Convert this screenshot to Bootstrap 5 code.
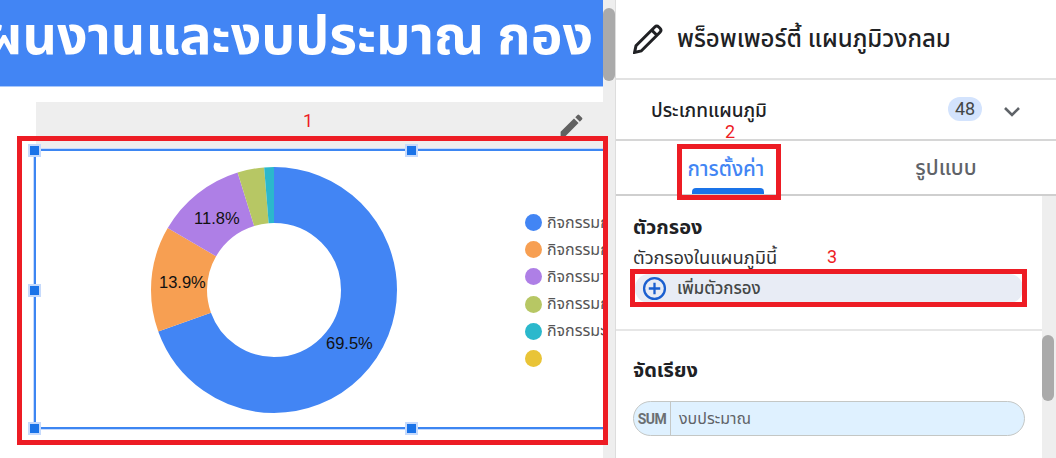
<!DOCTYPE html>
<html lang="th">
<head>
<meta charset="utf-8">
<title>พร็อพเพอร์ตี้ แผนภูมิวงกลม</title>
<link href="https://cdn.jsdelivr.net/npm/bootstrap@5.3.0/dist/css/bootstrap.min.css" rel="stylesheet">
<style>
html,body{height:458px;overflow:hidden;background:#fff;}
body{font-family:Roboto,"Noto Sans","Noto Sans Thai","Liberation Sans",sans-serif;color:#202124;position:relative;}
.shell{width:1056px;height:458px;}
.canvas-pane{width:603px;height:458px;overflow:hidden;}
.banner{height:87px;background:#4285f4;border-bottom:1px solid #a9c8fa;color:#fff;font-size:53.5px;font-weight:700;line-height:72px;white-space:nowrap;padding-right:10px;overflow:hidden;}
.chart-head{margin:15px 0 0 36px;height:48px;background:#eee;padding:9px 17px 0 0;}
.chart-frame{position:absolute;left:34px;top:149px;width:569px;height:280px;border:2px solid #3d86f2;border-right:0;outline:1px solid #c6dafc;}
.handle{position:absolute;width:9px;height:9px;background:#1a73e8;box-shadow:0 0 0 2px #c6dafc;}
.donut{position:absolute;left:151px;top:167px;}
.pct{position:absolute;font:16.5px "Liberation Sans",Arial,sans-serif;color:#111;line-height:18px;}
.legend-list{position:absolute;left:525px;top:209px;width:78px;overflow:hidden;}
.legend-row{height:27.2px;white-space:nowrap;color:#555;font-size:16px;}
.legend-dot{width:17px;height:17px;border-radius:50%;flex:none;margin-right:5px;}
.bar-track{width:13px;height:458px;background:#eee;border-right:1px solid #ddd;}
.thumb{background:#aaa;border-radius:6px;}
.thumb-a{width:12px;height:73px;}
.bar-track::before{content:"";display:block;height:8px;}
.panel{width:440px;height:458px;}
.panel-title{height:80px;border-bottom:2px solid #e2e2e2;padding-left:17px;font-size:24px;font-weight:500;gap:14px;}
.type-row{height:61px;border-bottom:2px solid #d6d6d6;padding:3px 32px 0 35px;font-size:19px;font-weight:500;}
.count{width:34px;height:24px;margin-top:-5px;border-radius:12px;background:#d3e3fd;color:#444746;font-size:18px;font-weight:400;}
.chev{margin-left:18px;}
.tabs{height:55px;border-bottom:2px solid #cfcfcf;font-size:21px;font-weight:500;}
.tab-item{width:50%;color:#5f6368;position:relative;padding-top:3px;}
.tab-on{color:#4285f4;font-size:20.5px;}
.tab-on::after{content:"";position:absolute;left:76px;bottom:0;width:72px;height:6px;background:#1a73e8;border-radius:4px 4px 0 0;}
.panel-body{height:262px;}
.panel-scroll{width:426px;}
.side-track{width:14px;background:#eee;}
.thumb-b{width:12px;height:66px;margin-top:139px;}
.block-filter{height:135px;border-bottom:2px solid #e6e6e6;padding:19px 17px 0 17px;}
.sec-head{font-size:20px;font-weight:700;line-height:24px;}
.sec-sub{font-size:18.3px;line-height:24px;margin-top:7px;color:#303134;}
.add-filter{height:29px;margin:4px 2px 0;background:#e8ecf5;border-radius:14px;font-size:16.8px;font-weight:500;color:#444746;padding-left:7px;gap:10px;}
.block-sort{padding:27px 17px 0 17px;}
.chip{height:35px;border:1px solid #c4c7c5;border-radius:18px;background:#dff1ff;margin-top:19px;font-size:16px;color:#5f6368;}
.chip-agg{width:37px;border-right:1px solid #c4c7c5;font:700 14px Roboto,sans-serif;letter-spacing:-.6px;color:#6b6f72;}
.note-box{position:absolute;border:5px solid #ed1c24;pointer-events:none;}
.note-num{position:absolute;color:#ed1c24;font-size:18px;line-height:20px;}
</style>
</head>
<body>
<div class="shell d-flex">
  <div class="canvas-pane">
    <div class="banner d-flex justify-content-end"><span>แผนงานและงบประมาณ กอง</span></div>
    <div class="chart-head d-flex justify-content-end">
      <svg width="29" height="29" viewBox="0 0 24 24" fill="#616161"><path d="M3 17.25V21h3.75L17.81 9.94l-3.75-3.75L3 17.25zM20.71 7.04a1 1 0 0 0 0-1.41l-2.34-2.34a1 1 0 0 0-1.41 0l-1.83 1.83 3.75 3.75 1.83-1.83z"/></svg>
    </div>
  </div>
  <div class="bar-track"><div class="thumb thumb-a"></div></div>
  <div class="panel d-flex flex-column">
    <div class="panel-title d-flex align-items-center">
      <svg width="30" height="30" viewBox="2.500 2.500 19 19" fill="none" stroke="#202124" stroke-width="1.900"><path d="M3.500 20.500l.9-4.200L16.300 4.400a1.800 1.800 0 0 1 2.500 0l.8.8a1.800 1.800 0 0 1 0 2.500L7.700 19.600l-4.200.9z"/><path d="M14.500 6.500l3 3"/></svg>
      <span>พร็อพเพอร์ตี้ แผนภูมิวงกลม</span>
    </div>
    <div class="type-row d-flex align-items-center">
      <span class="flex-grow-1">ประเภทแผนภูมิ</span>
      <span class="count d-flex align-items-center justify-content-center">48</span>
      <svg class="chev" width="24" height="24" viewBox="0 0 24 24" fill="none" stroke="#5f6368" stroke-width="2.600"><path d="M5 9l7 7 7-7"/></svg>
    </div>
    <div class="tabs d-flex">
      <div class="tab-item tab-on d-flex align-items-center justify-content-center">การตั้งค่า</div>
      <div class="tab-item d-flex align-items-center justify-content-center">รูปแบบ</div>
    </div>
    <div class="panel-body d-flex">
      <div class="panel-scroll">
        <div class="block-filter">
          <div class="sec-head">ตัวกรอง</div>
          <div class="sec-sub">ตัวกรองในแผนภูมินี้</div>
          <div class="add-filter d-flex align-items-center">
            <svg width="25" height="25" viewBox="0 0 24 24" fill="none" stroke="#1a5fd0" stroke-width="2.200"><circle cx="12" cy="12" r="10"/><path d="M12 6.500v11M6.500 12h11"/></svg>
            <span>เพิ่มตัวกรอง</span>
          </div>
        </div>
        <div class="block-sort">
          <div class="sec-head">จัดเรียง</div>
          <div class="chip d-flex align-items-stretch">
            <div class="chip-agg d-flex align-items-center justify-content-center">SUM</div>
            <div class="d-flex align-items-center ps-2">งบประมาณ</div>
          </div>
        </div>
      </div>
      <div class="side-track flex-grow-1"><div class="thumb thumb-b"></div></div>
    </div>
  </div>
</div>

<svg class="donut" width="246" height="246" viewBox="0 0 246 246" fill="none" stroke-width="56">
  <g transform="rotate(-90 123 123)">
    <circle cx="123" cy="123" r="95" pathLength="100" stroke="#4285f4" stroke-dasharray="69.5 30.5"/>
    <circle cx="123" cy="123" r="95" pathLength="100" stroke="#f79f52" stroke-dasharray="13.9 86.1" stroke-dashoffset="-69.5"/>
    <circle cx="123" cy="123" r="95" pathLength="100" stroke="#ae7fe6" stroke-dasharray="11.8 88.2" stroke-dashoffset="-83.4"/>
    <circle cx="123" cy="123" r="95" pathLength="100" stroke="#b7c764" stroke-dasharray="3.5 96.5" stroke-dashoffset="-95.2"/>
    <circle cx="123" cy="123" r="95" pathLength="100" stroke="#2bb8cc" stroke-dasharray="1.3 98.7" stroke-dashoffset="-98.7"/>
  </g>
</svg>
<span class="pct" style="left:194px;top:209px">11.8%</span>
<span class="pct" style="left:159px;top:273px">13.9%</span>
<span class="pct" style="left:326px;top:334px">69.5%</span>

<div class="legend-list">
  <div class="legend-row d-flex align-items-center"><i class="legend-dot" style="background:#4285f4"></i>กิจกรรมก</div>
  <div class="legend-row d-flex align-items-center"><i class="legend-dot" style="background:#f79f52"></i>กิจกรรมก</div>
  <div class="legend-row d-flex align-items-center"><i class="legend-dot" style="background:#ae7fe6"></i>กิจกรรมา</div>
  <div class="legend-row d-flex align-items-center"><i class="legend-dot" style="background:#b7c764"></i>กิจกรรมก</div>
  <div class="legend-row d-flex align-items-center"><i class="legend-dot" style="background:#2bb8cc"></i>กิจกรรมะ</div>
  <div class="legend-row d-flex align-items-center"><i class="legend-dot" style="background:#e9c437"></i></div>
</div>

<div class="chart-frame"></div>
<i class="handle" style="left:30px;top:146px"></i>
<i class="handle" style="left:407px;top:146px"></i>
<i class="handle" style="left:30px;top:286px"></i>
<i class="handle" style="left:30px;top:424px"></i>
<i class="handle" style="left:407px;top:424px"></i>

<div class="note-box" style="left:17px;top:136px;width:591px;height:309px"></div>
<div class="note-box" style="left:677px;top:144px;width:104px;height:56px"></div>
<div class="note-box" style="left:630px;top:269px;width:397px;height:38px"></div>
<span class="note-num" style="left:303px;top:111px">1</span>
<span class="note-num" style="left:725px;top:122px">2</span>
<span class="note-num" style="left:827px;top:247px">3</span>
</body>
</html>
